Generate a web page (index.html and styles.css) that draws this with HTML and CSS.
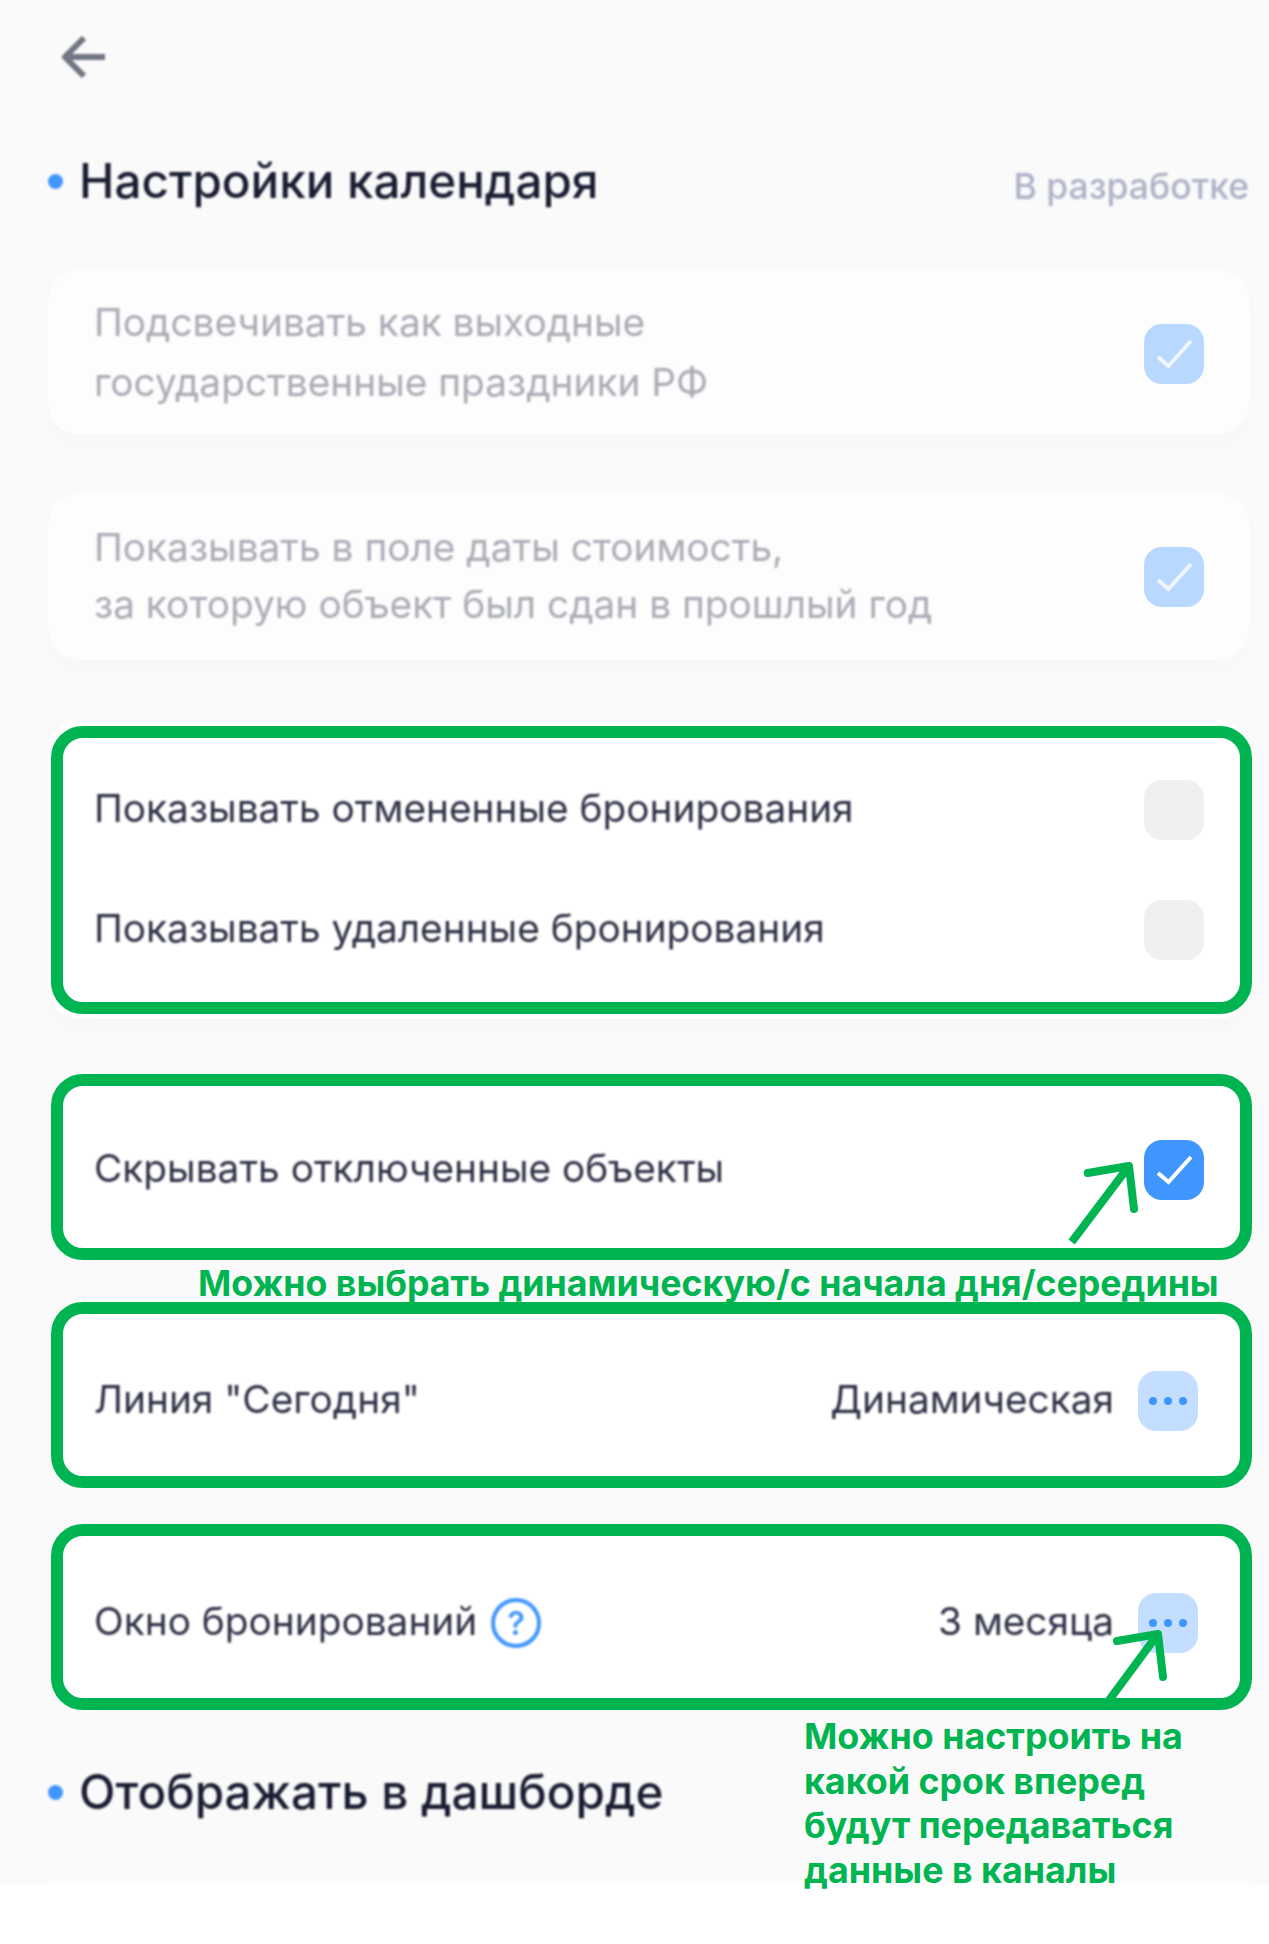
FILE: index.html
```html
<!DOCTYPE html>
<html lang="ru">
<head>
<meta charset="utf-8">
<title>Настройки календаря</title>
<link rel="stylesheet" href="styles.css">
</head>
<body>
<main class="screen">
  <svg class="back" viewBox="0 0 44 42" aria-hidden="true"><path d="M43 21H3M22 2 3 21l19 19"/></svg>

  <header class="title-row">
    <h2 class="title">Настройки календаря</h2>
    <span class="status">В разработке</span>
  </header>

  <section class="card card-a">
    <p class="label muted tall">Подсвечивать как выходные<br>государственные праздники РФ</p>
    <span class="check soft"><svg viewBox="0 0 60 60"><path d="M14 33l10.500 9L47 17"/></svg></span>
  </section>

  <section class="card card-b">
    <p class="label muted">Показывать в поле даты стоимость,<br>за которую объект был сдан в прошлый год</p>
    <span class="check soft"><svg viewBox="0 0 60 60"><path d="M14 33l10.500 9L47 17"/></svg></span>
  </section>

  <section class="card card-c">
    <div class="frame frame-double">
      <div class="row"><span class="label">Показывать отмененные бронирования</span><span class="check empty"></span></div>
      <div class="row"><span class="label">Показывать удаленные бронирования</span><span class="check empty"></span></div>
    </div>
  </section>

  <div class="frame frame-hide">
    <div class="row"><span class="label">Скрывать отключенные объекты</span><span class="check on"><svg viewBox="0 0 60 60"><path d="M14 33l10.500 9L47 17"/></svg></span></div>
    <svg class="arrow arrow-a" viewBox="0 0 85 95" aria-hidden="true"><path class="shaft" d="M10.700 87 65 15"/><path d="M26.700 18 68 11l5 43"/></svg>
  </div>

  <p class="note note-inline">Можно выбрать динамическую/с начала дня/середины</p>

  <div class="frame frame-menu frame-line">
    <div class="row">
      <span class="label">Линия "Сегодня"</span>
      <span class="value">Динамическая</span>
      <span class="more"><i></i><i></i><i></i></span>
    </div>
  </div>

  <div class="frame frame-menu frame-window">
    <div class="row">
      <span class="label">Окно бронирований</span>
      <span class="help">?</span>
      <span class="value">3 месяца</span>
      <span class="more"><i></i><i></i><i></i></span>
    </div>
    <svg class="arrow arrow-b" viewBox="0 0 80 90" aria-hidden="true"><path class="shaft" d="M8.300 83 60 13"/><path d="M22 16 63 9l5 43"/></svg>
    <p class="note note-block">Можно настроить на<br>какой срок вперед<br>будут передаваться<br>данные в каналы</p>
  </div>

  <h2 class="title title-second">Отображать в дашборде</h2>
  <div class="card card-stub"></div>
</main>
</body>
</html>
```

FILE: styles.css
```css
* { box-sizing: border-box; }

html, body { margin: 0; background: #fff; }

body {
  width: 1269px;
  height: 1944px;
  overflow: hidden;
  font-family: Inter, "Liberation Sans", sans-serif;
}

p, h2 { margin: 0; }

.screen {
  height: 1884px;
  padding: 36px 20px 0 48px;
  background: #fafafa;
}

.back {
  display: block;
  width: 44px;
  height: 42px;
  margin: 0 0 73px 14px;
  filter: blur(.8px);
}
.back path {
  fill: none;
  stroke: #727683;
  stroke-width: 6;
}

.title-row {
  display: flex;
  justify-content: space-between;
  align-items: center;
  height: 60px;
  margin-bottom: 59px;
}

.title {
  display: flex;
  align-items: center;
  gap: 16px;
  font-size: 47.600px;
  font-weight: 500;
  line-height: 60px;
  color: #1a1d32;
  white-space: nowrap;
  filter: blur(.8px);
}
.title::before {
  content: "";
  width: 15px;
  height: 15px;
  border-radius: 50%;
  background: #4096ff;
}

.status {
  margin-top: 10px;
  font-size: 35.500px;
  font-weight: 500;
  color: #aeb2c6;
  filter: blur(.8px);
}

.card {
  background: #fdfdfd;
  border-radius: 32px;
  box-shadow: 0 12px 30px rgba(0, 0, 0, .014);
}

.card-a, .card-b {
  display: flex;
  justify-content: space-between;
  align-items: center;
  padding: 0 45px 0 46px;
}
.card-a { height: 165px; margin-bottom: 58px; }
.card-b { height: 167px; margin-bottom: 60px; }
.card-a .label { margin-top: -2px; }
.card-b .label { margin-top: -4px; }
.card-a .check { margin-top: 3px; }

.card-c {
  height: 299px;
  margin-bottom: 55px;
  padding-top: 6px;
  background: #fff;
}

.label {
  font-size: 38.800px;
  line-height: 57px;
  color: #2e3045;
  white-space: nowrap;
  filter: blur(.8px);
}
.row .label { margin-top: -5px; }
.muted { color: #aaacb5; }
.tall { line-height: 60px; }

.check {
  flex: none;
  width: 60px;
  height: 60px;
  border-radius: 18px;
  filter: blur(.6px);
}
.check svg { display: block; width: 60px; height: 60px; }
.check path {
  fill: none;
  stroke: #fff;
  stroke-width: 4;
}
.soft { background: #b9d8ff; }
.soft path { stroke: #eef6ff; }
.on { background: #4096ff; }
.empty { background: #f0f0f0; }

.frame {
  position: relative;
  width: 1201px;
  margin-left: 3px;
  border: 12px solid #00b551;
  border-radius: 32px;
  background: #fff;
}

.row {
  display: flex;
  align-items: center;
  justify-content: space-between;
  height: 60px;
  padding: 0 36px 0 31px;
}

.frame-double { height: 288px; padding: 42px 0; display: flex; flex-direction: column; gap: 60px; }
.frame-hide { height: 186px; padding-top: 54px; }

.frame-menu { height: 186px; padding-top: 57px; }
.frame-menu .row { justify-content: flex-start; padding-right: 42px; }
.frame-line { margin-bottom: 36px; }

.value {
  margin-top: -5px;
  margin-left: auto;
  margin-right: 24px;
  font-size: 38.800px;
  color: #2e3045;
  white-space: nowrap;
  filter: blur(.8px);
}

.more {
  flex: none;
  display: flex;
  justify-content: center;
  align-items: center;
  gap: 7px;
  width: 60px;
  height: 60px;
  border-radius: 18px;
  background: #c4deff;
  filter: blur(.6px);
}
.more i {
  width: 8px;
  height: 8px;
  border-radius: 50%;
  background: #4096ff;
}

.help {
  flex: none;
  display: flex;
  justify-content: center;
  align-items: center;
  width: 50px;
  height: 50px;
  margin-left: 14px;
  border: 4px solid #4096ff;
  border-radius: 50%;
  font-size: 32px;
  font-weight: 600;
  color: #4096ff;
  filter: blur(.8px);
}

.arrow {
  position: absolute;
  overflow: visible;
}
.arrow path {
  fill: none;
  stroke: #00b551;
  stroke-width: 8;
  stroke-linecap: round;
  stroke-linejoin: round;
}
.arrow .shaft { stroke-linecap: butt; }
.arrow-a { left: 998px; top: 69px; width: 85px; height: 95px; }
.arrow-b { left: 1032px; top: 89px; width: 80px; height: 90px; }

.note {
  font-size: 35.700px;
  font-weight: 700;
  color: #00b551;
  white-space: nowrap;
}
.note-inline {
  height: 42px;
  padding-left: 150px;
  line-height: 46px;
}
.note-block {
  position: absolute;
  left: 741px;
  top: 100%;
  margin-top: 16px;
  font-size: 35.800px;
  line-height: 44.700px;
}

.title-second { margin-top: 52px; }

.card-stub {
  height: 3px;
  margin-top: 59px;
  background: #fff;
}
```
